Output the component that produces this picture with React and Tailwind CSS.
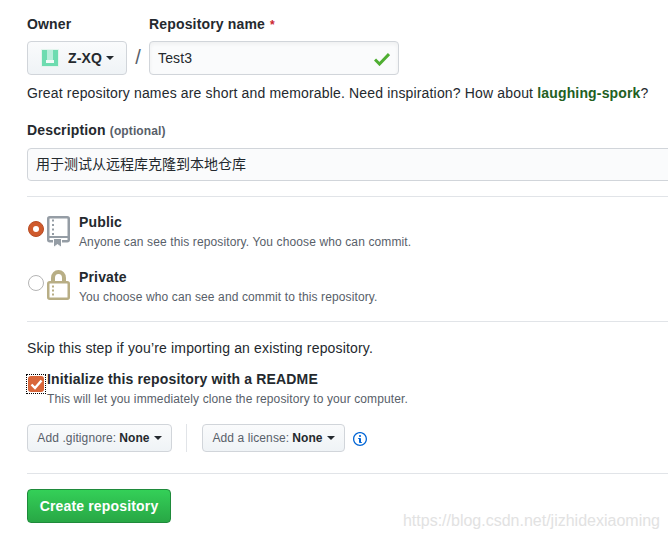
import React from 'react'

const Caret = () => (
  <span className="inline-block ml-1 w-0 h-0 align-middle border-t-[4px] border-x-[4px] border-x-transparent border-t-[#24292e]" />
)

const RepoIcon = () => (
  <svg width="24" height="32" viewBox="0 0 24 32" className="shrink-0 mt-[4px]">
    <rect x="1.250" y="1.250" width="20.500" height="24" rx="1.500" fill="none" stroke="#959da5" strokeWidth="2.500" />
    <path stroke="#959da5" strokeWidth="2" d="M1 21h21" />
    <path fill="#959da5" d="M5 3.500h2v2H5zM5 8h2v2H5zM5 12.500h2v2H5zM5 17h2v2H5z" />
    <path fill="#959da5" stroke="#fff" strokeWidth="1" d="M6.500 22.500h8V31.500l-4-3-4 3z" />
  </svg>
)

const LockIcon = () => (
  <svg width="24" height="32" viewBox="0 0 24 32" className="shrink-0 mt-[3px]">
    <path fill="none" stroke="#b8ae85" strokeWidth="4" d="M6 12V8c0-3.500 2.500-6 5.500-6s5.500 2.500 5.500 6v4" />
    <rect x="1.250" y="12.250" width="20.500" height="16.500" rx="1.500" fill="#fff" stroke="#b8ae85" strokeWidth="2.500" />
    <path fill="#b8ae85" d="M5 15.500h2v2H5zM5 19.500h2v2H5zM5 23.500h2v2H5z" />
  </svg>
)

const App = () => {
  return (
    <div className="relative w-[668px] h-[539px] overflow-hidden bg-white text-[#24292e] font-['Liberation_Sans','Noto_Sans_CJK_SC',sans-serif] text-[14px] tracking-[0.16px]">
      <div className="pl-[27px] pt-[14px]">
        {/* Owner + name */}
        <div className="flex">
          <div>
            <div className="font-bold leading-[20px] mb-[7px]">Owner</div>
            <div className="w-[100px] h-[34px] flex items-center pl-[13px] border border-[#d1d5da] rounded bg-gradient-to-b from-[#fafbfc] to-[#eff3f6] font-bold">
              <svg width="18" height="18" viewBox="0 0 18 18" className="shrink-0">
                <rect width="18" height="18" fill="#e2f5ed" />
                <rect x="1" y="1" width="16" height="16" fill="#6ddcb0" />
                <path fill="#b9eedb" d="M6 1h6v10H6z" />
                <path fill="#f2fbf8" d="M5 11h8v3H5z" />
              </svg>
              <span className="ml-[9px]">Z-XQ</span>
              <Caret />
            </div>
          </div>
          <div className="w-[22px] pt-[26px] text-center text-[20px] leading-[34px] text-[#586069]">/</div>
          <div>
            <div className="h-[20px] font-bold leading-[20px] mb-[7px] overflow-hidden">
              Repository name <span className="text-[12px] leading-none text-[#cb2431] ml-[1px]">*</span>
            </div>
            <div className="w-[250px] h-[34px] flex items-center justify-between pl-[8px] pr-[8px] border border-[#d1d5da] rounded bg-[#fafbfc] shadow-inner">
              <span>Test3</span>
              <svg width="16" height="14" viewBox="0 0 16 14" className="mt-[1px]">
                <path fill="none" stroke="#4fae32" strokeWidth="3" d="M1 7.500l4.500 4.500L15 2" />
              </svg>
            </div>
          </div>
        </div>
        <p className="mt-[8px] leading-[20px] whitespace-nowrap">
          Great repository names are short and memorable. Need inspiration? How about{' '}
          <span className="font-bold text-[#22601f]">laughing-spork</span>?
        </p>

        {/* Description */}
        <div className="mt-[17px] font-bold leading-[20px]">
          Description <span className="text-[12px] text-[#586069] tracking-[0.1px]">(optional)</span>
        </div>
        <div className="mt-[7px] w-[660px] h-[33px] flex items-center pl-[8px] border border-[#d1d5da] rounded-l bg-[#fafbfc] tracking-normal">
          用于测试从远程库克隆到本地仓库
        </div>

        <hr className="mt-[15px] border-[#e1e4e8]" />

        {/* Visibility */}
        <div className="mt-[15px] flex">
          <div className="w-[20px] pt-[9px] shrink-0">
            <div className="w-[16px] h-[16px] ml-px rounded-full bg-[#cf5a2c] border border-[#b84c24] flex items-center justify-center">
              <div className="w-[6px] h-[6px] rounded-full bg-white" />
            </div>
          </div>
          <RepoIcon />
          <div className="ml-[8px]">
            <div className="font-bold leading-[20px]">Public</div>
            <div className="text-[12px] leading-[18px] mt-[1px] text-[#586069] tracking-[0.12px]">
              Anyone can see this repository. You choose who can commit.
            </div>
          </div>
        </div>
        <div className="mt-[16px] flex">
          <div className="w-[20px] pt-[8px] shrink-0">
            <div className="w-[16px] h-[16px] ml-px rounded-full bg-white border border-[#b5b5b5]" />
          </div>
          <LockIcon />
          <div className="ml-[8px]">
            <div className="font-bold leading-[20px]">Private</div>
            <div className="text-[12px] leading-[18px] mt-[1px] text-[#586069] tracking-[0.12px]">
              You choose who can see and commit to this repository.
            </div>
          </div>
        </div>

        <hr className="mt-[15px] border-[#e1e4e8]" />

        {/* Init */}
        <p className="mt-[16px] leading-[20px]">Skip this step if you’re importing an existing repository.</p>
        <div className="mt-[11px] flex">
          <div className="w-[20px] h-[20px] mt-[5px] -ml-px mr-px shrink-0 border border-dotted border-black flex items-center justify-center">
            <div className="w-[16px] h-[16px] rounded-[3px] bg-[#d9663a] flex items-center justify-center">
              <svg width="13" height="13" viewBox="0 0 13 13">
                <path d="M1.500 6.500 5 10 11.500 2.500" fill="none" stroke="#fff" strokeWidth="2.400" />
              </svg>
            </div>
          </div>
          <div>
            <div className="font-bold leading-[20px]">Initialize this repository with a README</div>
            <div className="text-[12px] leading-[18px] mt-[1px] text-[#586069] tracking-[0.12px]">
              This will let you immediately clone the repository to your computer.
            </div>
          </div>
        </div>

        {/* Selects */}
        <div className="mt-[16px] flex items-center">
          <div className="h-[28px] w-[145px] flex items-center justify-center border border-[#d1d5da] rounded bg-gradient-to-b from-[#fafbfc] to-[#eff3f6] text-[12px] text-[#586069] tracking-[0.1px]">
            Add .gitignore:<span className="ml-[3px] font-bold text-[#24292e]">None</span>
            <Caret />
          </div>
          <div className="w-px h-[28px] bg-[#e1e4e8] ml-[14px] mr-[15px]" />
          <div className="h-[28px] w-[143px] flex items-center justify-center border border-[#d1d5da] rounded bg-gradient-to-b from-[#fafbfc] to-[#eff3f6] text-[12px] text-[#586069] tracking-[0.1px]">
            Add a license:<span className="ml-[3px] font-bold text-[#24292e]">None</span>
            <Caret />
          </div>
          <svg width="14" height="14" viewBox="0 1 14 14" className="ml-[8px] mt-[1px]">
            <path fill="#0366d6" fillRule="evenodd" d="M6.300 5.690a.942.942 0 0 1-.280-.700c0-.280.090-.520.280-.700.190-.180.420-.280.700-.280.280 0 .520.090.700.280.180.190.280.420.280.700 0 .280-.090.520-.280.700a1 1 0 0 1-.700.300c-.280 0-.520-.110-.700-.300zM8 7.990c-.020-.250-.110-.480-.310-.690-.200-.190-.420-.300-.690-.310H6c-.270.020-.480.130-.690.310-.200.200-.300.440-.310.690h1v3c.020.270.110.500.310.690.200.200.420.310.690.310h1c.270 0 .480-.110.690-.310.200-.190.300-.420.310-.690H8V7.980v.010zM7 2.300c-3.140 0-5.700 2.540-5.700 5.680 0 3.140 2.560 5.700 5.700 5.700s5.700-2.550 5.700-5.700c0-3.150-2.560-5.690-5.700-5.690v.010zM7 .98c3.860 0 7 3.140 7 7s-3.140 7-7 7-7-3.120-7-7 3.140-7 7-7z" />
          </svg>
        </div>

        <hr className="mt-[21px] border-[#e1e4e8]" />

        <div className="mt-[15px] w-[144px] h-[34px] flex items-center justify-center rounded border border-[#1f8a3b] bg-gradient-to-b from-[#34d058] to-[#28a745] text-white font-bold">
          Create repository
        </div>
      </div>

      {/* watermark */}
      <div className="absolute right-[8px] top-[512px] text-[#e2e2e2] text-[16px] leading-[18px] tracking-normal">
        https://blog.csdn.net/jizhidexiaoming
      </div>
    </div>
  )
}

export default App
